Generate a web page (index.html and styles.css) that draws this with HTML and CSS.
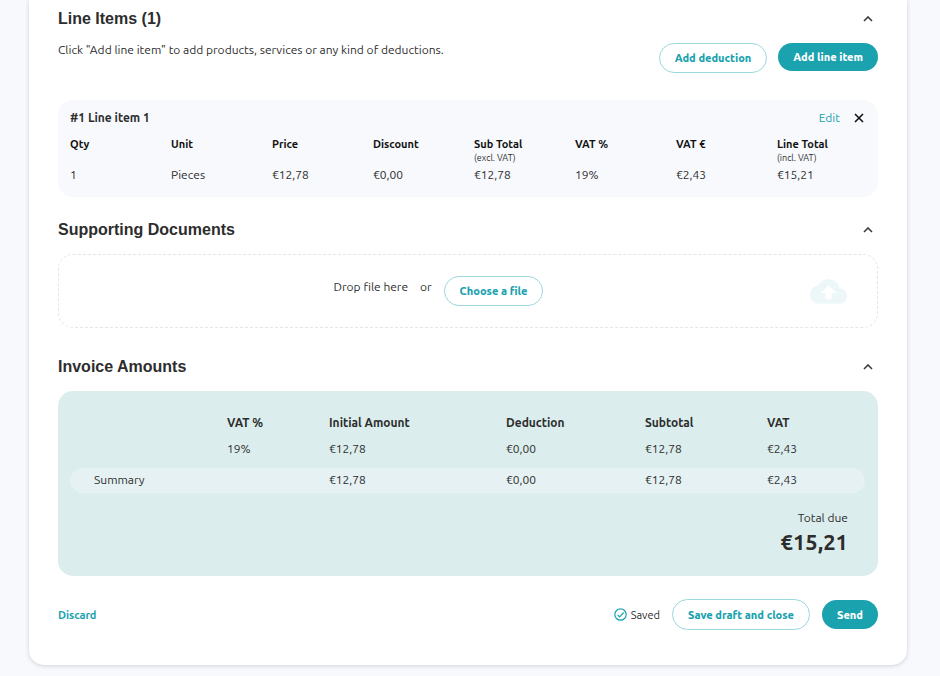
FILE: index.html
```html
<!DOCTYPE html>
<html lang="en">
<head>
<meta charset="utf-8">
<title>Invoice</title>
<link rel="stylesheet" href="styles.css">
</head>
<body>
<main class="card">
  <section>
    <header class="section-head">
      <h2>Line Items (1)</h2>
      <button class="icon-btn" type="button" aria-label="Collapse line items"><svg class="chevron" viewBox="0 0 10 6"><path d="M1 5l4-4 4 4"/></svg></button>
    </header>
    <div class="intro">
      <p>Click "Add line item" to add products, services or any kind of deductions.</p>
      <div class="actions">
        <button class="btn btn-outline" type="button">Add deduction</button>
        <button class="btn btn-fill" type="button">Add line item</button>
      </div>
    </div>
    <article class="item">
      <header class="item-head">
        <h3>#1 Line item 1</h3>
        <div class="item-tools">
          <a class="edit" href="#">Edit</a>
          <button class="icon-btn" type="button" aria-label="Remove line item"><svg class="cross" viewBox="0 0 10 10"><path d="M1 1l8 8M9 1l-8 8"/></svg></button>
        </div>
      </header>
      <table class="item-table">
        <thead>
          <tr><th>Qty</th><th>Unit</th><th>Price</th><th>Discount</th><th>Sub Total<small>(excl. VAT)</small></th><th>VAT %</th><th>VAT €</th><th>Line Total<small>(incl. VAT)</small></th></tr>
        </thead>
        <tbody>
          <tr><td>1</td><td>Pieces</td><td>€12,78</td><td>€0,00</td><td>€12,78</td><td>19%</td><td>€2,43</td><td>€15,21</td></tr>
        </tbody>
      </table>
    </article>
  </section>

  <section class="documents">
    <header class="section-head">
      <h2>Supporting Documents</h2>
      <button class="icon-btn" type="button" aria-label="Collapse documents"><svg class="chevron" viewBox="0 0 10 6"><path d="M1 5l4-4 4 4"/></svg></button>
    </header>
    <div class="drop">
      <div class="drop-main">
        <span>Drop file here</span>
        <span>or</span>
        <button class="btn btn-outline" type="button">Choose a file</button>
      </div>
      <svg class="cloud" viewBox="0 4 24 16" aria-hidden="true"><path d="M19.35 10.04C18.67 6.59 15.64 4 12 4 9.11 4 6.6 5.64 5.35 8.04 2.34 8.36 0 10.91 0 14c0 3.31 2.69 6 6 6h13c2.76 0 5-2.24 5-5 0-2.64-2.05-4.78-4.65-4.96zM14 13v4h-4v-4H7l5-5 5 5h-3z"/></svg>
    </div>
  </section>

  <section class="amounts">
    <header class="section-head">
      <h2>Invoice Amounts</h2>
      <button class="icon-btn" type="button" aria-label="Collapse amounts"><svg class="chevron" viewBox="0 0 10 6"><path d="M1 5l4-4 4 4"/></svg></button>
    </header>
    <div class="summary">
      <table class="summary-table">
        <colgroup><col class="c-name"><col class="c-rate"><col class="c-initial"><col class="c-deduction"><col class="c-subtotal"><col class="c-vat"></colgroup>
        <thead>
          <tr><td></td><th>VAT %</th><th>Initial Amount</th><th>Deduction</th><th>Subtotal</th><th>VAT</th></tr>
        </thead>
        <tbody>
          <tr class="rate-row"><td></td><td>19%</td><td>€12,78</td><td>€0,00</td><td>€12,78</td><td>€2,43</td></tr>
          <tr class="sum-row"><td>Summary</td><td></td><td>€12,78</td><td>€0,00</td><td>€12,78</td><td>€2,43</td></tr>
        </tbody>
      </table>
      <div class="total">
        <span>Total due</span>
        <strong>€15,21</strong>
      </div>
    </div>
  </section>

  <footer class="foot">
    <a class="discard" href="#">Discard</a>
    <div class="foot-actions">
      <span class="saved"><svg class="check" viewBox="0 0 13 13" aria-hidden="true"><circle cx="6.500" cy="6.500" r="5.700"/><path d="M3.600 6.800l2 2 4-4.300"/></svg>Saved</span>
      <button class="btn btn-outline btn-tall" type="button">Save draft and close</button>
      <button class="btn btn-fill btn-tall" type="button">Send</button>
    </div>
  </footer>
</main>
</body>
</html>
```
FILE: styles.css
```css
* {
  box-sizing: border-box;
}

body {
  margin: 0;
  padding: 0 33px 11px 29px;
  background: #f8f9fd;
  color: #2d2d2d;
  font: 12px/18px Ubuntu, "Noto Sans", sans-serif;
}

h2, h3, p {
  margin: 0;
}

.card {
  padding: 7px 29px 35px;
  background: #fff;
  border-radius: 0 0 15px 15px;
  box-shadow: 0 1px 4px rgba(40, 40, 70, 0.18);
}

.section-head {
  display: flex;
  align-items: center;
  justify-content: space-between;
  height: 24px;
  padding-right: 5px;
  margin-bottom: 12px;
}

h2 {
  color: #2d2d2d;
  font: bold 16px/24px "Liberation Sans", Arial, sans-serif;
}

.icon-btn {
  display: flex;
  padding: 0;
  border: 0;
  background: none;
}

.chevron {
  width: 10px;
  height: 6px;
  fill: none;
  stroke: #3c3c3c;
  stroke-width: 1.6;
}

.cross {
  width: 10px;
  height: 10px;
  fill: none;
  stroke: #111;
  stroke-width: 1.6;
}

.intro {
  display: flex;
  align-items: flex-start;
  justify-content: space-between;
  margin-bottom: 27px;
}

.intro p {
  margin-top: -2px;
}

.actions {
  display: flex;
  align-items: flex-start;
  gap: 11px;
}

.btn {
  height: 30px;
  padding: 0 15px;
  border: 1px solid #9bd7dd;
  border-radius: 16px;
  background: #fff;
  color: #1ba2af;
  font: 800 11px/16px Ubuntu, "Noto Sans", sans-serif;
  white-space: nowrap;
}

.btn-fill {
  height: 28px;
  border: 0;
  background: #1ba2af;
  color: #fff;
}

.item {
  padding: 9px 0 13px 12px;
  border-radius: 15px;
  background: #f8f9fd;
}

.item-head {
  display: flex;
  align-items: center;
  justify-content: space-between;
  padding-right: 14px;
  margin-bottom: 9px;
}

h3 {
  color: #2d2d2d;
  font-size: 12px;
  font-weight: 600;
  line-height: 18px;
}

.item-tools {
  display: flex;
  align-items: center;
  gap: 14px;
}

.edit, .discard {
  color: #1ba2af;
  text-decoration: none;
}

table {
  width: 100%;
  border-collapse: collapse;
  table-layout: fixed;
}

th, td {
  padding: 0;
  text-align: left;
}

.item-table th {
  height: 30px;
  color: #111;
  font-size: 11px;
  font-weight: 600;
  line-height: 16px;
  vertical-align: top;
}

.item-table small {
  display: block;
  color: #2d2d2d;
  font-size: 9px;
  font-weight: 400;
  line-height: 12px;
}

.documents {
  margin-top: 21px;
}

.drop {
  display: flex;
  align-items: center;
  height: 74px;
  padding-right: 30px;
  border: 1px dashed #e2e5ea;
  border-radius: 15px;
}

.drop-main {
  display: flex;
  flex: 1;
  justify-content: center;
  gap: 12px;
  padding-left: 8px;
}

.drop-main span {
  margin-top: 2px;
}

.cloud {
  width: 37px;
  height: 25px;
  fill: #edf7f8;
}

.amounts {
  margin-top: 27px;
}

.summary {
  padding: 20px 13px 19px 12px;
  border-radius: 15px;
  background: #dbedec;
}

.summary-table th {
  height: 24px;
  color: #2d2d2d;
  font-weight: 600;
}

.c-name { width: 157px; }
.c-rate { width: 102px; }
.c-initial { width: 177px; }
.c-deduction { width: 139px; }
.c-subtotal { width: 122px; }
.c-vat { width: 98px; }

.rate-row td {
  height: 33px;
  padding-bottom: 6px;
}

.sum-row td {
  height: 25px;
  padding-bottom: 2px;
  background: #e5f1f3;
}

.sum-row td:first-child {
  padding-left: 24px;
  border-radius: 13px 0 0 13px;
}

.sum-row td:last-child {
  border-radius: 0 13px 13px 0;
}

.total {
  display: flex;
  flex-direction: column;
  align-items: flex-end;
  padding: 16px 17px 0 0;
}

.total strong {
  color: #2d2d2d;
  font-size: 22px;
  font-weight: 700;
  line-height: 30px;
}

.foot {
  display: flex;
  align-items: center;
  justify-content: space-between;
  margin-top: 23px;
}

.discard {
  font-size: 11px;
  font-weight: 700;
}

.foot-actions {
  display: flex;
  align-items: center;
  gap: 12px;
}

.saved {
  display: flex;
  align-items: center;
  gap: 4px;
  font-size: 11px;
}

.check {
  width: 13px;
  height: 13px;
  fill: none;
  stroke: #1ba2af;
  stroke-width: 1.2;
}

.btn-tall {
  height: 31px;
}

.btn-fill.btn-tall {
  height: 29px;
}
```
